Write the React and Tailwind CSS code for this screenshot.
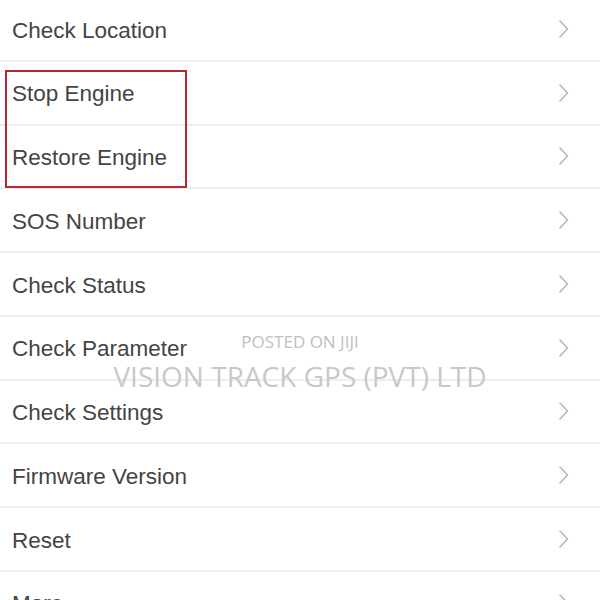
import React from "react";

const items = [
  "Check Location",
  "Stop Engine",
  "Restore Engine",
  "SOS Number",
  "Check Status",
  "Check Parameter",
  "Check Settings",
  "Firmware Version",
  "Reset",
  "More",
];

const Chevron = () => (
  <svg width="12" height="20" viewBox="0 0 12 20" fill="none" className="shrink-0">
    <path d="M3 2l7.5 8L3 18" stroke="#b8b8b8" strokeWidth="1.6" strokeLinecap="round" strokeLinejoin="round" />
  </svg>
);

export default function App() {
  return (
    <div className="relative w-[600px] h-[600px] overflow-hidden bg-white" style={{ fontFamily: "'Liberation Sans', Arial, sans-serif" }}>
      <div className="flex flex-col -mt-[2px]">
        {items.map((label) => (
          <div key={label} className="flex items-center justify-between h-[63.75px] pl-3 pr-[31px] border-b-2 border-[#ededed]">
            <span className="text-[22.5px] text-[#444444] leading-none pt-[4px]">{label}</span>
            <Chevron />
          </div>
        ))}
      </div>

      <div className="absolute left-[5px] top-[70px] w-[182px] h-[118px] border-[2.5px] border-[#b8262e]" />

      <div className="absolute left-0 right-0 top-[333px] flex flex-col items-center" style={{ fontFamily: "'Open Sans', sans-serif" }}>
        <span className="text-[17px] leading-none text-[#c0c0c0]">POSTED ON JIJI</span>
        <span className="text-[28px] leading-none text-[#c8c8c8] mt-[12px]">VISION TRACK GPS (PVT) LTD</span>
      </div>
    </div>
  );
}
